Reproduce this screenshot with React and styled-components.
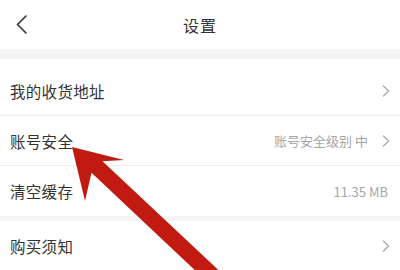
import styled, { createGlobalStyle } from "styled-components";

const GlobalStyle = createGlobalStyle`
  body {
    margin: 0;
    background: #ffffff;
    font-family: "Noto Sans CJK SC", "Noto Sans", sans-serif;
  }
`;

const rows = [
  { label: "我的收货地址", arrow: true },
  { label: "账号安全", value: "账号安全级别 中", arrow: true },
  { label: "清空缓存", value: "11.35 MB" },
];

const Chevron = ({ color = "#aaa" }) => (
  <svg width="8" height="12" viewBox="0 0 8 12">
    <polyline
      points="1.5,1 6.5,6 1.5,11"
      fill="none"
      stroke={color}
      strokeWidth="1.3"
      strokeLinecap="round"
      strokeLinejoin="round"
    />
  </svg>
);

const BackIcon = () => (
  <svg width="12" height="19" viewBox="0 0 12 19">
    <polyline
      points="10,1 1.5,9.5 10,18"
      fill="none"
      stroke="#333"
      strokeWidth="1.6"
      strokeLinecap="round"
      strokeLinejoin="round"
    />
  </svg>
);

const Row = ({ label, value, arrow, last }) => (
  <Item $last={last}>
    <Label>{label}</Label>
    <Right>
      {value && <Value>{value}</Value>}
      {arrow && <Chevron />}
    </Right>
  </Item>
);

export default function App() {
  return (
    <>
      <GlobalStyle />
      <Page>
        <Header>
          <Back>
            <BackIcon />
          </Back>
          <Title>设置</Title>
        </Header>
        <Band $h={10} />
        <Group>
          {rows.map((r, i) => (
            <Row key={r.label} {...r} last={i === rows.length - 1} />
          ))}
        </Group>
        <Band $h={5} />
        <Row label="购买须知" arrow />
        <Arrow viewBox="0 0 400 270" width="400" height="270">
          <polygon
            points="72,147 124,160 102.5,161.2 228,279 217,291 91.5,172.8 85,201"
            fill="#c11a11"
          />
        </Arrow>
      </Page>
    </>
  );
}

const Page = styled.div`
  position: relative;
  width: 400px;
  height: 270px;
  overflow: hidden;
  background: #fff;
`;

const Header = styled.div`
  position: relative;
  height: 49px;
  display: flex;
  align-items: center;
  justify-content: center;
`;

const Back = styled.div`
  position: absolute;
  left: 16px;
  top: 15px;
  display: flex;
`;

const Title = styled.div`
  font-size: 16px;
  color: #333;
  letter-spacing: 1px;
`;

const Band = styled.div`
  height: ${(p) => p.$h}px;
  background: #f5f5f5;
`;

const Group = styled.div`
  padding-top: 7px;
`;

const Item = styled.div`
  height: 50px;
  box-sizing: border-box;
  display: flex;
  align-items: center;
  justify-content: space-between;
  padding: 0 10px 0 10px;
  border-bottom: ${(p) => (p.$last ? "none" : "1px solid #eeeeee")};
`;

const Label = styled.span`
  font-size: 15.5px;
  color: #333;
  letter-spacing: 0.3px;
`;

const Right = styled.div`
  display: flex;
  align-items: center;
  gap: 12px;
`;

const Value = styled.span`
  font-size: 13px;
  color: #a6a6a6;
  margin-right: 2px;
`;

const Arrow = styled.svg`
  position: absolute;
  left: 0;
  top: 0;
  pointer-events: none;
`;
